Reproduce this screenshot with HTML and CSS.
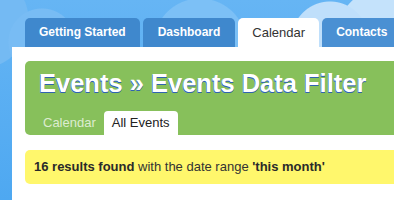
FILE: index.html
```html
<!DOCTYPE html>
<html>
<head>
<meta charset="utf-8">
<link rel="stylesheet" href="styles.css">
</head>
<body>
<div class="page">
  <nav class="tabs">
    <a class="tab">Getting Started</a>
    <a class="tab">Dashboard</a>
    <a class="tab active">Calendar</a>
    <a class="tab">Contacts</a>
  </nav>
  <div class="panel">
    <div class="header">
      <h1 class="title">Events » Events Data Filter</h1>
      <div class="subtabs">
        <a class="subtab">Calendar</a>
        <a class="subtab active">All Events</a>
      </div>
    </div>
    <div class="notice"><b>16 results found</b> with the date range <b>'this month'</b></div>
  </div>
</div>
</body>
</html>
```
FILE: styles.css
```css
html, body {
  margin: 0;
  padding: 0;
  overflow: hidden;
  height: 200px;
}
body {
  font-family: "Liberation Sans", Arial, Helvetica, sans-serif;
  background-color: #55acf1;
  background-image:
    radial-gradient(circle at 330px 40px, #bfdffb 0 38px, transparent 39px),
    radial-gradient(circle at 380px 30px, #c4e2fb 0 40px, transparent 41px),
    radial-gradient(circle at 200px 45px, #7cc0f6 0 46px, transparent 47px),
    radial-gradient(circle at 42px 42px, #78bcf4 0 33px, transparent 34px),
    radial-gradient(circle at -20px 20px, #74baf3 0 48px, transparent 49px),
    linear-gradient(#66b5f4, #4ea8f1);
}
.page {
  width: 440px;
  padding: 18px 0 0 12px;
}
.tabs {
  display: flex;
  gap: 3px;
  margin-left: 13px;
  height: 29px;
}
.tab {
  display: block;
  height: 29px;
  line-height: 29px;
  padding: 0 14px;
  font-size: 12px;
  font-weight: bold;
  color: #ffffff;
  background: #3f88cd;
  border-radius: 5px 5px 0 0;
  white-space: nowrap;
}
.tab:nth-child(2) {
  padding: 0 15px;
}
.tab:nth-child(4) {
  background: #4a90d3;
}
.tab.active {
  background: #ffffff;
  color: #333333;
  font-weight: normal;
  font-size: 13px;
  padding: 0 14px;
}
.panel {
  box-sizing: border-box;
  background: #ffffff;
  padding: 14px 0 0 13px;
  height: 153px;
}
.header {
  background: #87c05b;
  border-radius: 5px;
  padding: 7px 0 0 10px;
}
.title {
  margin: 0 0 13px 4px;
  font-size: 25.5px;
  line-height: 30px;
  font-weight: bold;
  color: #ffffff;
  text-shadow: 0 1px 0 #2f63b0, -0.5px 0.5px 0 #3f75c0;
  white-space: nowrap;
}
.subtabs {
  display: flex;
  height: 24px;
}
.subtab {
  display: block;
  padding: 0 8px;
  line-height: 24px;
  font-size: 13px;
  color: rgba(255, 255, 255, 0.72);
  border-radius: 4px 4px 0 0;
  white-space: nowrap;
}
.subtab.active {
  background: #ffffff;
  color: #222222;
}
.notice {
  margin-top: 15px;
  background: #fff76c;
  border-radius: 5px;
  height: 34px;
  line-height: 34px;
  padding-left: 9px;
  font-size: 13px;
  color: #333333;
  white-space: nowrap;
}
.notice b {
  color: #2a2a2a;
}
```
